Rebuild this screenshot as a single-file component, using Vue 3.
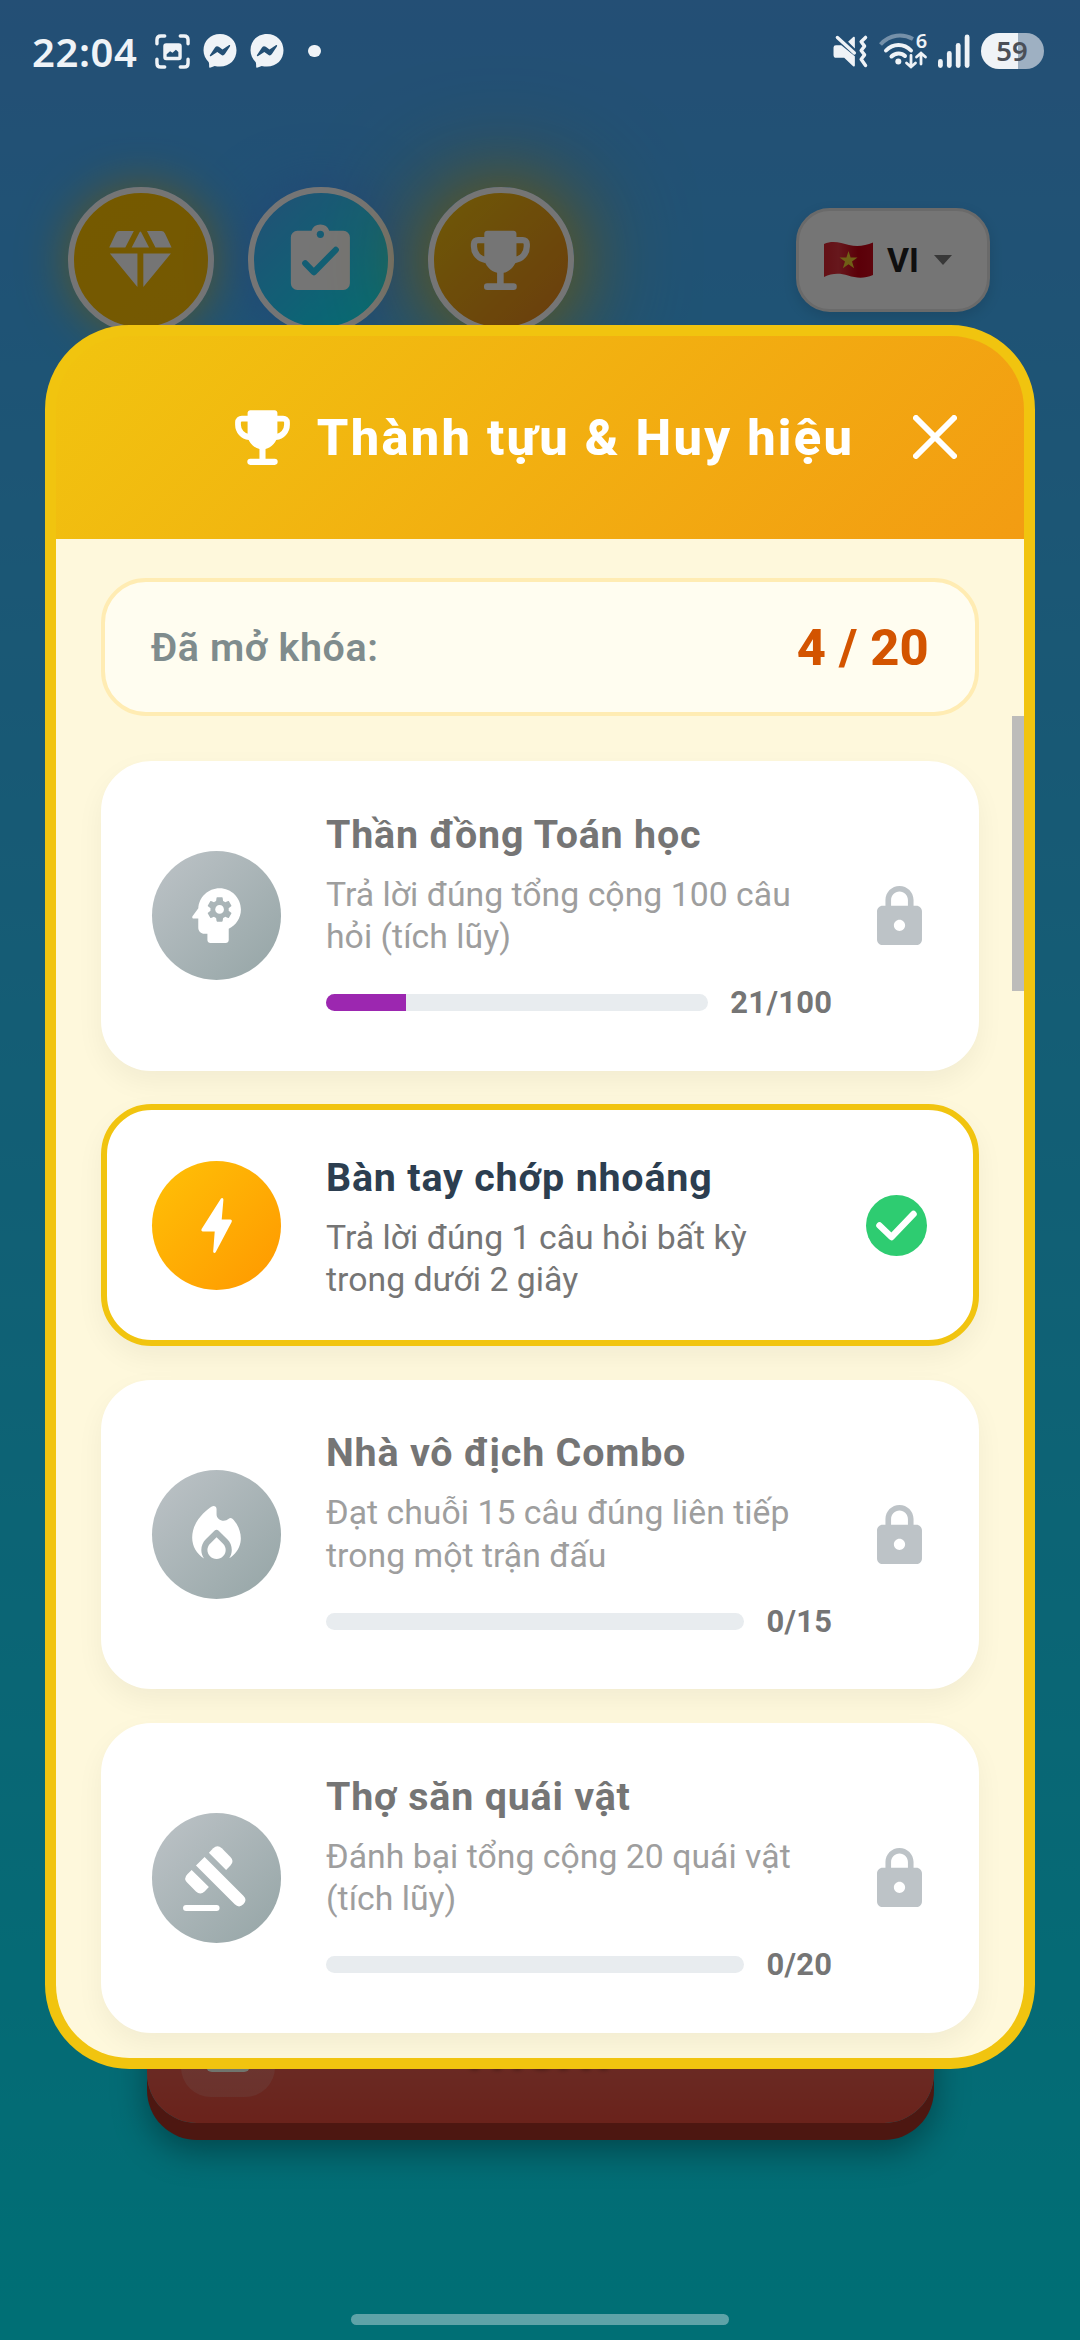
<script setup>
const achievements = [
  {
    icon: 'mind',
    title: 'Thần đồng Toán học',
    text: 'Trả lời đúng tổng cộng 100 câu\nhỏi (tích lũy)',
    value: 21,
    goal: 100,
    unlocked: false
  },
  {
    icon: 'bolt',
    title: 'Bàn tay chớp nhoáng',
    text: 'Trả lời đúng 1 câu hỏi bất kỳ\ntrong dưới 2 giây',
    unlocked: true
  },
  {
    icon: 'fire',
    title: 'Nhà vô địch Combo',
    text: 'Đạt chuỗi 15 câu đúng liên tiếp\ntrong một trận đấu',
    value: 0,
    goal: 15,
    unlocked: false
  },
  {
    icon: 'gavel',
    title: 'Thợ săn quái vật',
    text: 'Đánh bại tổng cộng 20 quái vật\n(tích lũy)',
    value: 0,
    goal: 20,
    unlocked: false
  }
]

const icons = {
  mind: [
    'M13 8.57c-.79 0-1.43.64-1.43 1.43s.64 1.43 1.43 1.43 1.43-.64 1.43-1.43-.64-1.43-1.43-1.43z',
    'M13 3C9.25 3 6.2 5.94 6.02 9.64L4.1 12.2c-.25.33-.01.8.4.8H6v3c0 1.1.9 2 2 2h1v2c0 .55.45 1 1 1h5c.55 0 1-.45 1-1v-3.68c2.36-1.12 4-3.53 4-6.32 0-3.87-3.13-7-7-7zm3 7c0 .13-.01.26-.02.39l.83.66c.08.06.1.16.05.25l-.8 1.39c-.05.09-.16.12-.24.09l-.99-.4c-.21.16-.43.29-.67.39L14 13.83c-.01.1-.1.17-.2.17h-1.6c-.1 0-.18-.07-.2-.17l-.15-1.06c-.25-.1-.47-.23-.68-.39l-.99.4c-.09.03-.2 0-.25-.09l-.8-1.39c-.05-.08-.03-.19.05-.25l.84-.66c-.01-.13-.02-.26-.02-.39s.02-.27.04-.39l-.85-.66c-.08-.06-.1-.16-.05-.26l.8-1.38c.05-.09.15-.12.24-.09l1 .4c.2-.15.43-.29.67-.39L12 6.17c.02-.1.1-.17.2-.17h1.6c.1 0 .18.07.2.17l.15 1.06c.24.1.46.23.67.39l1-.4c.09-.03.2 0 .24.09l.8 1.38c.05.09.03.2-.05.26l-.85.66c.03.12.04.25.04.39z'
  ],
  bolt: [
    'M13.4 3.2c.4-.5.9-.2.85.4L13.7 10h2.8c.45 0 .65.4.45.8l-5.2 9.9c-.3.55-.9.35-.85-.25l.5-6.5H7.5c-.4 0-.6-.4-.4-.8z'
  ],
  fire: [
    'M12 12.9l-2.13 2.09C9.31 15.55 9 16.28 9 17.06 9 18.68 10.35 20 12 20s3-1.32 3-2.94c0-.78-.31-1.52-.87-2.07L12 12.9z',
    'M17.1 6.75c-.35-.28-.8-.22-1.1.05C14.6 8.1 12 7.3 12 5.3V3.6c0-.85-.85-1.25-1.55-.83C8.3 4.1 4 7.8 4 13c0 2.92 1.56 5.47 3.89 6.86-.56-.79-.89-1.76-.89-2.8 0-1.32.52-2.56 1.47-3.5l2.83-2.78a1 1 0 0 1 1.4 0l2.83 2.79c.95.93 1.47 2.17 1.47 3.5 0 1.02-.31 1.96-.85 2.75 1.89-1.15 3.29-3.06 3.71-5.3.5-2.75-.73-6-2.76-7.77z'
  ],
  gavel: [
    'M2 21h10a1 1 0 0 1 0 2H2a1 1 0 0 1 0-2z',
    'M9.49 3.826L10.9 2.4Q12.317 1 13.73 2.41L16.56 5.24Q17.97 6.656 16.56 8.07L15.144 9.486z',
    'M3.825 9.485L9.482 15.142L8.07 16.556Q6.654 17.97 5.24 16.556L2.41 13.73Q1 12.313 2.41 10.9z',
    'M5.245 8.07L8.075 5.243L20.8 17.97Q22.215 19.385 20.8 20.8Q19.387 22.21 17.97 20.8z'
  ]
}

const trophyCup =
  'M8 3h8c.5 0 .9.4.9.9v7.2c0 2.4-2 4.2-3.9 4.7V19h3a1 1 0 0 1 0 2H8a1 1 0 0 1 0-2h3v-3.2c-1.9-.5-3.9-2.3-3.9-4.7V3.9c0-.5.4-.9.9-.9z'
const trophyHandles =
  'M7.3 5.8H5.2c-.7 0-1.25.5-1.25 1.2v.8c0 2.1 1.5 3.8 3.7 4.1M16.7 5.8h2.1c.7 0 1.25.5 1.25 1.2v.8c0 2.1-1.5 3.8-3.7 4.1'
</script>

<template>
  <div class="screen">
    <div class="home">
      <div class="toolbar">
        <div class="round gem">
          <svg viewBox="0 0 24 24">
            <path d="M2.5 8.1L4.5 3.8Q4.9 3.05 5.6 3.05H10L7.4 8.1zM9.35 8.1L11.75 3.4Q12 3 12.25 3.4L14.65 8.1zM21.5 8.1L19.5 3.8Q19.1 3.05 18.4 3.05H14L16.6 8.1zM2.7 9.9H11.1V20.1zM21.3 9.9H12.9V20.1z" />
          </svg>
        </div>
        <div class="round tasks">
          <svg viewBox="0 0 24 24">
            <mask id="clip-cut">
              <rect width="24" height="24" fill="#fff" />
              <circle cx="12" cy="4.05" r="1.1" fill="#000" />
              <path d="M7.4 12.9l2.6 2.7 6.7-6.8" fill="none" stroke="#000" stroke-width="1.9" stroke-linecap="round" stroke-linejoin="round" />
            </mask>
            <path mask="url(#clip-cut)" d="M5 3h4.3a2.85 2.85 0 0 1 5.4 0H19a2 2 0 0 1 2 2v14a2 2 0 0 1-2 2H5a2 2 0 0 1-2-2V5a2 2 0 0 1 2-2z" />
          </svg>
        </div>
        <div class="round cup">
          <svg viewBox="0 0 24 24">
            <path :d="trophyCup" />
            <path :d="trophyHandles" class="handles" />
          </svg>
        </div>
        <div class="language">
          <svg class="flag" viewBox="0 0 49 36">
            <defs>
              <linearGradient id="cloth">
                <stop offset="0" stop-color="#d8232f" />
                <stop offset=".3" stop-color="#e0333e" />
                <stop offset=".7" stop-color="#c60012" />
                <stop offset="1" stop-color="#cc0a1c" />
              </linearGradient>
            </defs>
            <path d="M0 2C9-2 17 1 25 3s16 1 24-2.500V33c-9 4-17 3-25 .500S8 31 0 35z" fill="url(#cloth)" />
            <path d="M24.500 9l2.100 6.500h6.900L28 19.600l2.100 6.600-5.600-4-5.600 4 2.100-6.600-5.500-4.100h6.900z" fill="#f5d130" />
          </svg>
          <span>VI</span>
          <i class="caret"></i>
        </div>
      </div>
      <div class="exit">
        <div class="exit-tile"><i></i></div>
        <span>THOÁT</span>
      </div>
    </div>

    <div class="overlay">
      <div class="status">
        <span class="clock">22:04</span>
        <svg class="shot" viewBox="0 0 36 36">
          <path d="M2 10V6q0-4 4-4h4M26 2h4q4 0 4 4v4M34 26v4q0 4-4 4h-4M10 34H6q-4 0-4-4v-4" fill="none" stroke="currentColor" stroke-width="3.500" stroke-linecap="round" />
          <path fill-rule="evenodd" d="M11.500 9.500h13a3 3 0 0 1 3 3v11.500a3 3 0 0 1-3 3h-13a3 3 0 0 1-3-3V12.500a3 3 0 0 1 3-3zM12 23.500h12v-5l-2.500-2.300-3.500 3-2.500-1.500-3.500 3z" />
        </svg>
        <svg v-for="n in 2" :key="n" class="chat" viewBox="0 0 34 34">
          <path fill-rule="evenodd" d="M17 0C7.300 0 .5 7 .5 16.300c0 4.600 2 8.700 5.100 11.600.7.700.5 3.900.6 5 .1.800.9 1 1.500.7l4-1.700c1.700.5 3.400.7 5.300.7 9.700 0 16.500-7 16.500-16.300S26.700 0 17 0zM7 21l5-7.500c1-1.500 2.500-1.600 3.800-.7l3.700 2.800 6.300-4.300c1-.6 1.800.1 1.100 1.100l-5 7.700c-1 1.400-2.400 1.700-3.700.7l-3.900-2.900L8.200 22.100c-.8.600-1.800-.1-1.200-1.100z" />
        </svg>
        <i class="dot"></i>
        <span class="grow"></span>
        <svg class="mute" viewBox="0 0 36 34">
          <path d="M3 10.500h5.500L22.500 22v9.500c0 1-1 1.300-1.800.6L11.500 23.500H3.500C1.500 23.500.5 22.500.5 20.500v-7.500q0-2.500 2.500-2.500zM15.500 7l5.300-4.900c.8-.7 1.700-.3 1.700.7V14z" />
          <path d="M4.500 2.500L22 18.500M33.500 2.500l-4.500 4.500 3.500 4.500-3.500 4.500 3.500 4.500-3.500 4.500 4.500 6.500" fill="none" stroke="currentColor" stroke-width="3.500" stroke-linecap="round" stroke-linejoin="round" />
        </svg>
        <div class="wifi">
          <svg viewBox="0 0 50 37">
            <g fill="none" stroke="currentColor" stroke-width="4" stroke-linecap="round">
              <path d="M2.500 11.500C12 1 25 .5 35 6" opacity=".4" stroke-linecap="butt" />
              <path d="M8 17.500c7-7.500 18-7.500 25 0M13.500 23.500c4-4 10-4 13.500-.500" />
              <path d="M33 22.500v11M28.500 30l4.500 4 4.500-4M43 31V20.500M38.500 24l4.500-4 4.500 4" stroke-width="2.800" />
            </g>
            <circle cx="20.300" cy="28.500" r="3" />
          </svg>
          <span>6</span>
        </div>
        <svg class="signal" viewBox="0 0 32 34">
          <rect x="0" y="25" width="4.800" height="9" rx="2.400" />
          <rect x="8.900" y="17" width="4.800" height="17" rx="2.400" />
          <rect x="17.800" y="9" width="4.800" height="25" rx="2.400" />
          <rect x="26.700" y=".5" width="4.800" height="33.500" rx="2.400" />
        </svg>
        <span class="battery">59</span>
      </div>
      <i class="home-bar"></i>
    </div>

    <div class="modal">
      <header>
        <h1>
          <svg viewBox="0 0 24 24">
            <path :d="trophyCup" />
            <path :d="trophyHandles" class="handles" />
          </svg>
          Thành tựu &amp; Huy hiệu
        </h1>
        <svg class="close" viewBox="0 0 44 44">
          <path d="M3 3l38 38M41 3L3 41" />
        </svg>
      </header>
      <div class="body">
        <main>
          <div class="summary">
            <span>Đã mở khóa:</span>
            <strong>4 / 20</strong>
          </div>
          <article v-for="a in achievements" :key="a.title" :class="{ unlocked: a.unlocked }">
            <div class="badge">
              <svg viewBox="0 0 24 24">
                <path v-for="d in icons[a.icon]" :key="d" :d="d" />
              </svg>
            </div>
            <div class="info">
              <h2>{{ a.title }}</h2>
              <p>{{ a.text }}</p>
              <div v-if="a.goal" class="progress">
                <div class="track">
                  <div class="fill" :style="{ width: (a.value / a.goal) * 100 + '%' }"></div>
                </div>
                <b>{{ a.value }}/{{ a.goal }}</b>
              </div>
            </div>
            <div class="state">
              <svg v-if="a.unlocked" class="check" viewBox="0 0 61 61">
                <circle cx="30.500" cy="30.500" r="30.500" fill="#2ecc71" />
                <path d="M13.500 30.500l12 11.500L47.500 19" fill="none" stroke="#fff" stroke-width="6.500" stroke-linecap="round" stroke-linejoin="round" />
              </svg>
              <svg v-else class="lock" viewBox="4 1 16 21">
                <path d="M18 8h-1V6c0-2.760-2.240-5-5-5S7 3.240 7 6v2H6c-1.100 0-2 .9-2 2v10c0 1.100.9 2 2 2h12c1.100 0 2-.9 2-2V10c0-1.100-.9-2-2-2zm-6 9c-1.100 0-2-.9-2-2s.9-2 2-2 2 .9 2 2-.9 2-2 2zM9 8V6c0-1.660 1.340-3 3-3s3 1.340 3 3v2H9z" />
              </svg>
            </div>
          </article>
        </main>
        <i class="scroll-thumb"></i>
      </div>
    </div>
  </div>
</template>

<style>
body {
  margin: 0;
}
</style>

<style scoped>
* {
  box-sizing: border-box;
}
svg {
  display: block;
  fill: currentColor;
  flex: none;
}
.screen {
  position: relative;
  width: 1080px;
  height: 2340px;
  overflow: hidden;
  font-family: Roboto, 'Liberation Sans', sans-serif;
}
.home {
  height: 2340px;
  display: flex;
  flex-direction: column;
  justify-content: space-between;
  padding: 187px 90px 217px 67.5px;
  background: linear-gradient(180deg, #4facfe, #00f2fe);
}
.toolbar {
  display: flex;
  align-items: center;
  gap: 33.75px;
}
.round {
  width: 146.25px;
  height: 146.25px;
  border: 6px solid #fff;
  border-radius: 50%;
  display: grid;
  place-items: center;
  color: #fff;
}
.round svg {
  width: 78.75px;
  height: 78.75px;
}
.gem {
  background: linear-gradient(135deg, #ffc400, #ffc107);
  box-shadow: 0 0 48px rgba(255, 193, 7, 0.7);
}
.tasks {
  background: linear-gradient(135deg, #4facfe, #00f2fe);
  background-origin: border-box;
  box-shadow: 0 0 56px rgba(79, 140, 254, 0.6);
}
.cup {
  background: linear-gradient(135deg, #f1c40f, #e8831f);
  background-origin: border-box;
  box-shadow: 0 0 56px 4px rgba(241, 196, 15, 0.5), 0 0 112px 6px rgba(241, 180, 15, 0.75);
}
.handles {
  fill: none;
  stroke: currentColor;
  stroke-width: 1.9;
}
.language {
  margin-left: auto;
  width: 194px;
  height: 104.5px;
  border: 3px solid #e8e8e8;
  border-radius: 34px;
  background: #fff;
  box-shadow: 0 5px 14px rgba(0, 0, 0, 0.12);
  display: flex;
  align-items: center;
  padding-left: 25px;
  font-size: 33.75px;
  font-weight: 700;
  color: #222;
}
.flag {
  width: 49px;
  height: 36px;
  margin-right: 14px;
}
.caret {
  margin-left: 15px;
  border: 9px solid transparent;
  border-top: 10px solid #7a7a7a;
  border-bottom: 0;
}
.exit {
  align-self: center;
  margin-left: 22.5px;
  width: 787px;
  height: 146px;
  border-radius: 50px;
  background: linear-gradient(180deg, #e8756a, #e74c3c);
  box-shadow: 0 17px 0 #a93226, 0 28px 34px rgba(0, 0, 0, 0.35);
  display: grid;
  grid-template-columns: 94px 1fr 94px;
  align-items: center;
  padding: 0 34px;
  color: #fff;
  font-size: 47px;
  font-weight: 800;
  letter-spacing: 1.4px;
  text-align: center;
  text-shadow: 0 6px 5px rgba(0, 0, 0, 0.5);
}
.exit span {
  padding-bottom: 8px;
}
.exit-tile {
  height: 94px;
  border-radius: 30px;
  background: rgba(255, 255, 255, 0.15);
  display: grid;
  place-items: center;
}
.exit-tile i {
  width: 44px;
  height: 44px;
  border-radius: 6px;
  background: #f4fff0;
}
.overlay {
  position: absolute;
  inset: 0;
  background: rgba(0, 0, 0, 0.54);
  display: flex;
  flex-direction: column;
  justify-content: space-between;
  align-items: center;
  padding-bottom: 15px;
}
.home-bar {
  width: 378px;
  height: 11px;
  border-radius: 5.5px;
  background: #5ea3a8;
}
.status {
  width: 1080px;
  height: 102px;
  padding: 0 36.5px 0 32px;
  display: flex;
  align-items: center;
  color: #eff3f7;
  font-family: 'Noto Sans', sans-serif;
  font-weight: 600;
}
.clock {
  font-size: 40px;
  letter-spacing: 0.6px;
  width: 123px;
}
.shot {
  width: 35px;
  height: 35px;
  margin-right: 12.5px;
}
.chat {
  width: 34px;
  height: 34px;
  margin-right: 13.3px;
}
.dot {
  width: 12.5px;
  height: 12.5px;
  border-radius: 50%;
  background: currentColor;
  margin-left: 11px;
}
.grow {
  flex: 1;
}
.mute {
  width: 35px;
  height: 33px;
  margin-right: 10px;
}
.wifi {
  position: relative;
  width: 50px;
  height: 37px;
  margin-right: 9.7px;
}
.wifi svg {
  width: 50px;
  height: 37px;
}
.wifi span {
  position: absolute;
  right: 0.5px;
  top: -6px;
  font-size: 20px;
  line-height: 28px;
}
.signal {
  width: 32px;
  height: 34px;
  margin-right: 11px;
}
.battery {
  width: 63px;
  height: 36px;
  border-radius: 18px;
  background: linear-gradient(90deg, #eff3f7 59%, #9eb0c2 59%);
  color: #4b4f57;
  font-size: 27.5px;
  line-height: 36px;
  text-align: center;
}
.modal {
  position: absolute;
  left: 45px;
  top: 325px;
  width: 990px;
  height: 1743.5px;
  border: 11px solid #f1c40f;
  border-radius: 84.4px;
  background: #f1c40f;
  overflow: hidden;
  display: flex;
  flex-direction: column;
}
header {
  flex: none;
  height: 202.5px;
  background: linear-gradient(135deg, #f1c40f, #f39c12);
  color: #fff;
  display: grid;
  grid-template-columns: 1fr auto 1fr;
  align-items: center;
}
h1 {
  grid-column: 2;
  margin: 0;
  display: flex;
  align-items: center;
  gap: 18px;
  font-size: 50.6px;
  font-weight: 800;
  letter-spacing: 2.25px;
  white-space: nowrap;
}
h1 svg {
  width: 73px;
  height: 73px;
}
.close {
  width: 44px;
  height: 44px;
  justify-self: end;
  margin-right: 67.5px;
  fill: none;
  stroke: #fff;
  stroke-width: 6;
  stroke-linecap: round;
}
.body {
  flex: 1;
  min-height: 0;
  display: flex;
  background: #fef8dc;
}
main {
  flex: none;
  width: 968px;
  padding: 39.5px 45px 0;
  display: flex;
  flex-direction: column;
  gap: 33.75px;
}
.scroll-thumb {
  width: 12px;
  height: 275.3px;
  margin: 177.5px 0 0 -12px;
  background: #bdbcba;
}
.summary {
  height: 138px;
  margin-bottom: 11.25px;
  border: 4px solid #ffecb3;
  border-radius: 45px;
  background: #fffdf0;
  display: flex;
  align-items: center;
  justify-content: space-between;
  padding: 0 46px;
  font-size: 39.4px;
  font-weight: 600;
  letter-spacing: 0.6px;
  color: #7f8c8d;
}
.summary strong {
  font-size: 50.6px;
  font-weight: 800;
  letter-spacing: 0.2px;
  color: #d35400;
}
article {
  flex: none;
  border: 6px solid #fff;
  border-radius: 50.6px;
  background: #fff;
  box-shadow: 0 11px 28px rgba(0, 0, 0, 0.05);
  padding: 44.6px;
  display: flex;
  align-items: center;
}
article.unlocked {
  border-color: #f1c40f;
}
.badge {
  flex: none;
  width: 129.4px;
  height: 129.4px;
  border-radius: 50%;
  background: linear-gradient(135deg, #bdc3c7, #95a5a6);
  display: grid;
  place-items: center;
  color: #fff;
}
.unlocked .badge {
  background: linear-gradient(135deg, #ffc107, #ff9800);
}
.badge svg {
  width: 73.1px;
  height: 73.1px;
}
.info {
  flex: none;
  width: 506.25px;
  margin: 0 33.75px 0 45px;
}
h2 {
  margin: 0 0 16px;
  font-size: 39.4px;
  line-height: 46px;
  font-weight: 700;
  letter-spacing: 0.8px;
  color: #757575;
  white-space: nowrap;
}
.unlocked h2 {
  color: #2c3e50;
}
p {
  margin: 0 0 -5.9px;
  font-size: 33.75px;
  line-height: 42.2px;
  letter-spacing: 0.03px;
  color: #9e9e9e;
  white-space: pre;
}
.unlocked p {
  color: #757575;
}
.progress {
  padding-top: 32.9px;
  display: flex;
  align-items: center;
  gap: 22.5px;
}
.track {
  flex: 1;
  height: 17px;
  border-radius: 8.5px;
  background: #e8ecef;
  overflow: hidden;
}
.fill {
  height: 100%;
  background: #9c27b0;
}
b {
  font-size: 30.9px;
  line-height: 35px;
  font-weight: 700;
  letter-spacing: 0.3px;
  color: #757575;
}
.state {
  flex: none;
  width: 61.9px;
  display: grid;
  place-items: center;
}
.check {
  width: 61px;
  height: 61px;
}
.lock {
  width: 45px;
  height: 59px;
  margin-left: 6px;
  color: #bdc3c7;
}
</style>
